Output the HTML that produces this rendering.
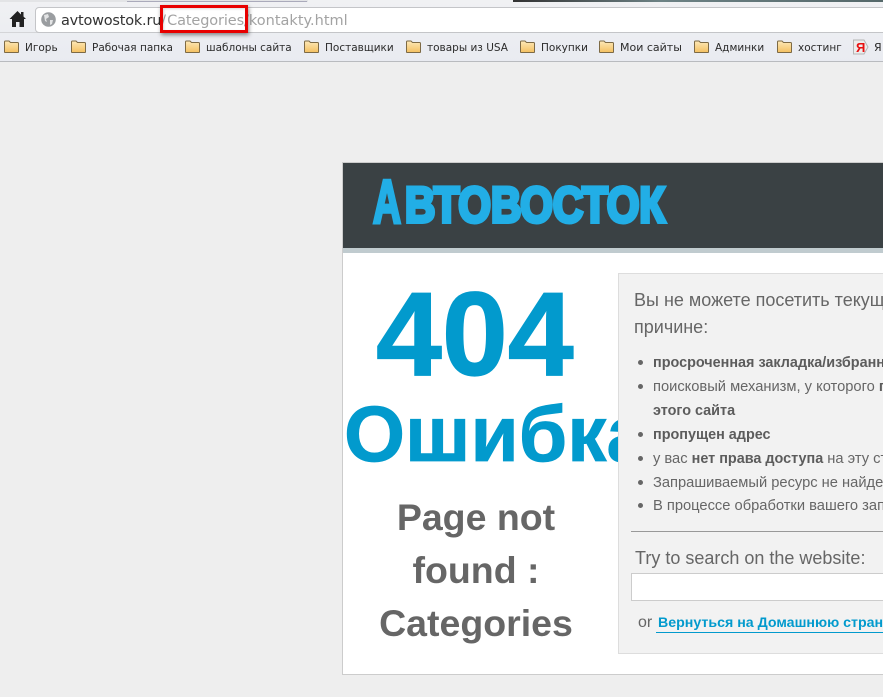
<!DOCTYPE html>
<html lang="ru"><head><meta charset="utf-8"><title>404</title>
<style>
html,body{margin:0;padding:0;width:883px;height:697px;overflow:hidden;background:#eee;font-family:"Liberation Sans",sans-serif}
.a{position:absolute;white-space:nowrap}
#wrap{position:relative;width:883px;height:697px;overflow:hidden}
.bm{position:absolute;top:41px;font:10.500px/14px "DejaVu Sans",sans-serif;color:#2b2b2b;white-space:nowrap}
.f{position:absolute;top:40px;width:15px;height:13px}
.li{position:absolute;left:653px;font-size:14.700px;line-height:18px;color:#666;white-space:nowrap}
.li b{color:#5c5c5c;font-size:14.400px}
.dot{position:absolute;left:638px;width:5px;height:5px;border-radius:50%;background:#666}
</style></head><body><div id="wrap">
<div class="a" style="left:0;top:0;width:883px;height:62px;background:linear-gradient(#f0f1f3,#e9ebf1)"></div>
<div class="a" style="left:0;top:0;width:308px;height:2px;background:#e3e4e6"></div>
<div class="a" style="left:127px;top:0;width:180px;height:2px;border-bottom:1px solid #aab;box-sizing:border-box"></div>
<div class="a" style="left:513px;top:0;width:370px;height:2px;background:linear-gradient(90deg,#333,#6d8285 40%,#55686a)"></div>
<div class="a" style="left:0;top:61px;width:883px;height:1px;background:#b9bbbf"></div>
<div class="a" style="left:0;top:32px;width:883px;height:1px;background:#d4d5d8"></div>

<svg class="a" style="left:9px;top:10px" width="18" height="18" viewBox="0 0 18 18"><path d="M8.500 1 L0.500 9 L3 9 L3 17 L7 17 L7 12 L10.500 12 L10.500 17 L15 17 L15 9 L17 9 L14.500 6.500 L14.500 2 L12 2 L12 4.500 Z" fill="#222"/></svg>
<div class="a" style="left:35px;top:7px;width:860px;height:26px;background:#fff;border:1px solid #c4c5c8;border-radius:4px;box-sizing:border-box"></div>
<svg class="a" style="left:41px;top:12px" width="15" height="15" viewBox="0 0 15 15"><circle cx="7.500" cy="7.500" r="7.300" fill="#9a9da0"/><path d="M3 3 L7 2 L8 5 L5 7 L6 10 L4 9 Z M9 8 L12 8 L11 12 L9 13 Z" fill="#e3e4e5"/></svg>
<div class="a" style="left:61px;top:12px;font:14.500px/18px 'DejaVu Sans',sans-serif;color:#333;letter-spacing:-.22px">avtowostok.ru<span style="color:#a3a3a3;letter-spacing:0">/<span style="letter-spacing:-.12px;margin-left:1px">Categories</span>/kontakty.html</span></div>
<div class="a" style="left:160px;top:5px;width:88px;height:28px;border:3px solid #e80000;box-sizing:border-box;box-shadow:1px 2px 4px rgba(0,0,0,.45), inset 1px 1px 2px rgba(0,0,0,.15)"></div>

<svg width="0" height="0" style="position:absolute"><defs><linearGradient id="g" x1="0" y1="0" x2="0" y2="1"><stop offset="0" stop-color="#fde8b8"/><stop offset="1" stop-color="#f4c060"/></linearGradient></defs></svg>
<svg class="f" style="left:4px" viewBox="0 0 15 13"><path d="M.5 12 V2 Q.5 1 1.500 1 H5 L6.500 2.500 H13.500 Q14.500 2.500 14.500 3.500 V12 Q14.500 12.500 13.500 12.500 H1.500 Q.5 12.500 .5 12 Z" fill="url(#g)" stroke="#7d6a45"/></svg>
<div class="bm" style="left:25px">Игорь</div>
<svg class="f" style="left:71px" viewBox="0 0 15 13"><path d="M.5 12 V2 Q.5 1 1.500 1 H5 L6.500 2.500 H13.500 Q14.500 2.500 14.500 3.500 V12 Q14.500 12.500 13.500 12.500 H1.500 Q.5 12.500 .5 12 Z" fill="url(#g)" stroke="#7d6a45"/></svg>
<div class="bm" style="left:92px">Рабочая папка</div>
<svg class="f" style="left:185px" viewBox="0 0 15 13"><path d="M.5 12 V2 Q.5 1 1.500 1 H5 L6.500 2.500 H13.500 Q14.500 2.500 14.500 3.500 V12 Q14.500 12.500 13.500 12.500 H1.500 Q.5 12.500 .5 12 Z" fill="url(#g)" stroke="#7d6a45"/></svg>
<div class="bm" style="left:206px">шаблоны сайта</div>
<svg class="f" style="left:304px" viewBox="0 0 15 13"><path d="M.5 12 V2 Q.5 1 1.500 1 H5 L6.500 2.500 H13.500 Q14.500 2.500 14.500 3.500 V12 Q14.500 12.500 13.500 12.500 H1.500 Q.5 12.500 .5 12 Z" fill="url(#g)" stroke="#7d6a45"/></svg>
<div class="bm" style="left:325px">Поставщики</div>
<svg class="f" style="left:406px" viewBox="0 0 15 13"><path d="M.5 12 V2 Q.5 1 1.500 1 H5 L6.500 2.500 H13.500 Q14.500 2.500 14.500 3.500 V12 Q14.500 12.500 13.500 12.500 H1.500 Q.5 12.500 .5 12 Z" fill="url(#g)" stroke="#7d6a45"/></svg>
<div class="bm" style="left:427px">товары из USA</div>
<svg class="f" style="left:520px" viewBox="0 0 15 13"><path d="M.5 12 V2 Q.5 1 1.500 1 H5 L6.500 2.500 H13.500 Q14.500 2.500 14.500 3.500 V12 Q14.500 12.500 13.500 12.500 H1.500 Q.5 12.500 .5 12 Z" fill="url(#g)" stroke="#7d6a45"/></svg>
<div class="bm" style="left:541px">Покупки</div>
<svg class="f" style="left:599px" viewBox="0 0 15 13"><path d="M.5 12 V2 Q.5 1 1.500 1 H5 L6.500 2.500 H13.500 Q14.500 2.500 14.500 3.500 V12 Q14.500 12.500 13.500 12.500 H1.500 Q.5 12.500 .5 12 Z" fill="url(#g)" stroke="#7d6a45"/></svg>
<div class="bm" style="left:620px;font-size:11px">Мои сайты</div>
<svg class="f" style="left:694px" viewBox="0 0 15 13"><path d="M.5 12 V2 Q.5 1 1.500 1 H5 L6.500 2.500 H13.500 Q14.500 2.500 14.500 3.500 V12 Q14.500 12.500 13.500 12.500 H1.500 Q.5 12.500 .5 12 Z" fill="url(#g)" stroke="#7d6a45"/></svg>
<div class="bm" style="left:715px">Админки</div>
<svg class="f" style="left:777px" viewBox="0 0 15 13"><path d="M.5 12 V2 Q.5 1 1.500 1 H5 L6.500 2.500 H13.500 Q14.500 2.500 14.500 3.500 V12 Q14.500 12.500 13.500 12.500 H1.500 Q.5 12.500 .5 12 Z" fill="url(#g)" stroke="#7d6a45"/></svg>
<div class="bm" style="left:798px">хостинг</div>
<svg class="a" style="left:853px;top:39px" width="16" height="16" viewBox="0 0 16 16"><path d="M.5 1 H11 L15 8 L11 15 H.5 Z" fill="#ececec" stroke="#b5b5b5"/><text x="3" y="13" font-family="Liberation Sans" font-weight="bold" font-size="13" fill="#e81010">Я</text></svg>
<div class="bm" style="left:874px;font-size:11px">Я</div>

<div class="a" style="left:342px;top:162px;width:560px;height:513px;background:#fff;border:1px solid #ccc;box-sizing:border-box"></div>
<div class="a" style="left:343px;top:163px;width:560px;height:85px;background:#3a4144"></div>
<div class="a" style="left:343px;top:248px;width:560px;height:5px;background:#c0cbcf"></div>
<svg class="a" style="left:343px;top:163px" width="540" height="85" viewBox="0 0 540 85">
<text x="30" y="60" font-family="Liberation Sans" font-weight="bold" font-size="61" fill="#22aee6" stroke="#22aee6" stroke-width="3.500" stroke-linejoin="miter" stroke-miterlimit="3" textLength="28" lengthAdjust="spacingAndGlyphs">А</text>
<text x="62" y="59" font-family="Liberation Sans" font-weight="bold" font-size="50" fill="#22aee6" stroke="#22aee6" stroke-width="4" stroke-linejoin="miter" textLength="260" lengthAdjust="spacingAndGlyphs">ВТОВОСТОК</text>
</svg>

<div class="a" style="left:376px;top:270px;font-size:118.500px;line-height:130px;font-weight:bold;color:#029acd;-webkit-text-stroke:1.2px #029acd">404</div>
<div class="a" style="left:344px;top:388px;font-size:78.500px;line-height:92px;font-weight:bold;color:#029acd;-webkit-text-stroke:.8px #029acd">Ошибка</div>
<div class="a" style="left:343px;top:491px;width:266px;text-align:center;font-size:37.500px;line-height:53px;font-weight:bold;color:#666;white-space:normal">Page not<br>found :<br>Categories</div>

<div class="a" style="left:618px;top:273px;width:300px;height:381px;background:#f2f2f2;border:1px solid #ddd;box-sizing:border-box"></div>
<div class="a" style="left:634px;top:291px;font-size:18px;line-height:18px;color:#666">Вы не можете посетить текущую страницу по следующей</div>
<div class="a" style="left:634px;top:318px;font-size:18px;line-height:18px;color:#666">причине:</div>

<div class="dot" style="top:360px"></div>
<div class="li" style="top:354px"><b>просроченная закладка/избранное</b></div>
<div class="dot" style="top:384px"></div>
<div class="li" style="top:378px">поисковый механизм, у которого <b>просроченный</b></div>
<div class="li" style="top:402px"><b>этого сайта</b></div>
<div class="dot" style="top:432px"></div>
<div class="li" style="top:426px"><b>пропущен адрес</b></div>
<div class="dot" style="top:456px"></div>
<div class="li" style="top:450px">у вас <b>нет права доступа</b> на эту страницу</div>
<div class="dot" style="top:480px"></div>
<div class="li" style="top:474px">Запрашиваемый ресурс не найден.</div>
<div class="dot" style="top:503px"></div>
<div class="li" style="top:497px">В процессе обработки вашего запроса</div>

<div class="a" style="left:631px;top:531px;width:260px;height:1px;background:#999"></div>
<div class="a" style="left:635px;top:549px;font-size:18px;line-height:18px;color:#666">Try to search on the website:</div>
<div class="a" style="left:631px;top:573px;width:280px;height:28px;background:#fff;border:1px solid #ccc;box-sizing:border-box"></div>
<div class="a" style="left:638px;top:614px;font-size:16px;line-height:18px;color:#666">or</div>
<div class="a" style="left:656px;top:615px;font-size:14.200px;line-height:17px;font-weight:bold;color:#029acd;border-bottom:1px solid #029acd;padding-left:2px">Вернуться на Домашнюю страницу</div>
</div></body></html>
